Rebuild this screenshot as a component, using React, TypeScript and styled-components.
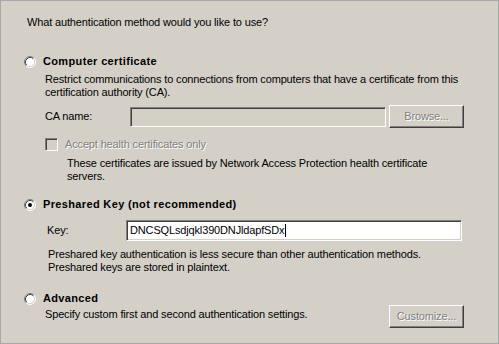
import React from "react";
import styled, { createGlobalStyle } from "styled-components";

const Global = createGlobalStyle`
  html, body { margin: 0; padding: 0; background: #d4d0c8; }
  body { font-family: "Liberation Sans", Arial, sans-serif; font-size: 11px; color: #000; }
  * { box-sizing: border-box; }
`;

const Frame = styled.div`
  width: 499px;
  height: 344px;
  border: 1px solid #a9a9a9;
  background: #d4d0c8;
  padding-top: 15px;
  display: flex;
  flex-direction: column;
  line-height: 13px;
  letter-spacing: -0.15px;
  overflow: hidden;
`;

const Heading = styled.div`
  margin-left: 26px;
  height: 13px;
`;

const OptionRow = styled.label<{ $top: number }>`
  display: flex;
  align-items: center;
  gap: 7px;
  height: 13px;
  margin-top: ${(p) => p.$top}px;
  padding-left: 23px;
  font-weight: bold;
  letter-spacing: 0.35px;
`;

const Desc = styled.div<{ $left: number; $top: number }>`
  margin-left: ${(p) => p.$left}px;
  margin-top: ${(p) => p.$top}px;
`;

const FieldRow = styled.div<{ $left: number; $top: number; $h: number }>`
  display: flex;
  align-items: center;
  margin-left: ${(p) => p.$left}px;
  margin-top: ${(p) => p.$top}px;
  height: ${(p) => p.$h}px;
`;

const FieldLabel = styled.span<{ $w: number }>`
  width: ${(p) => p.$w}px;
  flex: none;
`;

const Sunken = styled.div<{ $w: number; $h: number; $disabled?: boolean }>`
  width: ${(p) => p.$w}px;
  height: ${(p) => p.$h}px;
  flex: none;
  border: 1px solid;
  border-color: #808080 #ffffff #ffffff #808080;
  box-shadow: inset 1px 1px #404040, inset -1px -1px #d4d0c8;
  background: ${(p) => (p.$disabled ? "#d4d0c8" : "#ffffff")};
  padding: 3px 0 0 3px;
  display: flex;
  align-items: flex-start;
  white-space: nowrap;
`;

const Caret = styled.span`
  display: inline-block;
  width: 1px;
  height: 13px;
  background: #000;
  margin-left: 1px;
`;

const Button = styled.div<{ $left: number }>`
  width: 75px;
  height: 23px;
  flex: none;
  margin-left: ${(p) => p.$left}px;
  border: 1px solid;
  border-color: #ffffff #404040 #404040 #ffffff;
  box-shadow: inset -1px -1px #808080;
  display: flex;
  align-items: center;
  justify-content: center;
  color: #808080;
  text-shadow: 1px 1px #ffffff;
  padding-bottom: 1px;
`;

const CheckRow = styled.div<{ $top: number }>`
  display: flex;
  align-items: center;
  gap: 7px;
  margin-left: 44px;
  margin-top: ${(p) => p.$top}px;
  height: 13px;
`;

const CheckBox = styled.span`
  width: 13px;
  height: 13px;
  flex: none;
  border: 1px solid;
  border-color: #808080 #ffffff #ffffff #808080;
  box-shadow: inset 1px 1px #404040, inset -1px -1px #d4d0c8;
  background: #d4d0c8;
`;

const DisabledText = styled.span`
  color: #808080;
  text-shadow: 1px 1px #ffffff;
`;

const BottomRow = styled.div`
  display: flex;
  align-items: flex-start;
  margin-left: 44px;
  height: 23px;
`;

const BottomText = styled.span`
  width: 344px;
  margin-top: 3px;
  flex: none;
`;

function Radio({ checked }: { checked?: boolean }) {
  return (
    <svg width="12" height="12" viewBox="0 0 12 12" style={{ flex: "none" }}>
      <circle cx="6" cy="6" r="5" fill="#ffffff" />
      <path d="M2.11 9.89 A5.5 5.5 0 0 1 9.89 2.11" stroke="#808080" fill="none" strokeWidth="1" />
      <path d="M9.89 2.11 A5.5 5.5 0 0 1 2.11 9.89" stroke="#ffffff" fill="none" strokeWidth="1" />
      <path d="M2.82 9.18 A4.5 4.5 0 0 1 9.18 2.82" stroke="#404040" fill="none" strokeWidth="1" />
      <path d="M9.18 2.82 A4.5 4.5 0 0 1 2.82 9.18" stroke="#d4d0c8" fill="none" strokeWidth="1" />
      {checked && <circle cx="6" cy="6" r="2" fill="#000" />}
    </svg>
  );
}

export default function App() {
  return (
    <>
      <Global />
      <Frame>
        <Heading>What authentication method would you like to use?</Heading>

        <OptionRow $top={26}>
          <Radio />
          <span>Computer certificate</span>
        </OptionRow>
        <Desc $left={44} $top={5}>
          Restrict communications to connections from computers that have a certificate from this
          <br />
          certification authority (CA).
        </Desc>
        <FieldRow $left={44} $top={6} $h={23}>
          <FieldLabel $w={85}>CA name:</FieldLabel>
          <Sunken $w={256} $h={20} $disabled />
          <Button $left={3}>Browse...</Button>
        </FieldRow>
        <CheckRow $top={10}>
          <CheckBox />
          <DisabledText>Accept health certificates only</DisabledText>
        </CheckRow>
        <Desc $left={66} $top={6}>
          These certificates are issued by Network Access Protection health certificate
          <br />
          servers.
        </Desc>

        <OptionRow $top={15}>
          <Radio checked />
          <span>Preshared Key (not recommended)</span>
        </OptionRow>
        <FieldRow $left={46} $top={9} $h={21}>
          <FieldLabel $w={79}>Key:</FieldLabel>
          <Sunken $w={336} $h={21}>
            <span>DNCSQLsdjqkl390DNJldapfSDx</span>
            <Caret />
          </Sunken>
        </FieldRow>
        <Desc $left={47} $top={7}>
          Preshared key authentication is less secure than other authentication methods.
          <br />
          Preshared keys are stored in plaintext.
        </Desc>

        <OptionRow $top={18}>
          <Radio />
          <span>Advanced</span>
        </OptionRow>
        <BottomRow>
          <BottomText>Specify custom first and second authentication settings.</BottomText>
          <Button $left={0}>Customize...</Button>
        </BottomRow>
      </Frame>
    </>
  );
}
